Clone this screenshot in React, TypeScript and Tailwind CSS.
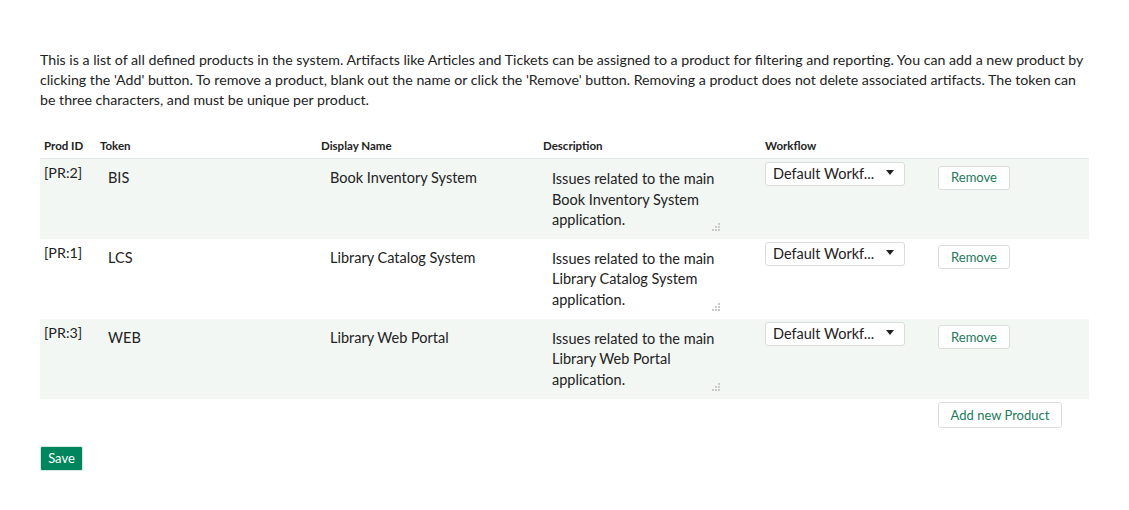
import React from "react";

interface Product {
  id: string;
  token: string;
  name: string;
  description: string;
}

const products: Product[] = [
  {
    id: "[PR:2]",
    token: "BIS",
    name: "Book Inventory System",
    description: "Issues related to the main Book Inventory System application.",
  },
  {
    id: "[PR:1]",
    token: "LCS",
    name: "Library Catalog System",
    description: "Issues related to the main Library Catalog System application.",
  },
  {
    id: "[PR:3]",
    token: "WEB",
    name: "Library Web Portal",
    description: "Issues related to the main Library Web Portal application.",
  },
];

function Grip() {
  // dotted resize grip in the corner of the textarea
  return (
    <svg
      width="9"
      height="9"
      viewBox="0 0 9 9"
      className="absolute right-[40px] bottom-[7px] pointer-events-none"
    >
      <rect x="6" y="0" width="2" height="2" fill="#c9ccc9" />
      <rect x="3" y="3" width="2" height="2" fill="#c9ccc9" />
      <rect x="6" y="3" width="2" height="2" fill="#c9ccc9" />
      <rect x="0" y="6" width="2" height="2" fill="#c9ccc9" />
      <rect x="3" y="6" width="2" height="2" fill="#c9ccc9" />
      <rect x="6" y="6" width="2" height="2" fill="#c9ccc9" />
    </svg>
  );
}

export default function App() {
  return (
    <div className="min-h-[510px] bg-white px-10 pt-[50px] pb-10 font-['Lato','Noto_Sans',sans-serif] text-[#222]">
      {/* Intro */}
      <p className="text-[14.2px] leading-[20px] pr-1">
        This is a list of all defined products in the system. Artifacts like Articles and Tickets can be
        assigned to a product for filtering and reporting. You can add a new product by clicking the 'Add'
        button. To remove a product, blank out the name or click the 'Remove' button. Removing a product does
        not delete associated artifacts. The token can be three characters, and must be unique per product.
      </p>

      {/* Products table */}
      <table className="mt-7 w-full table-fixed border-collapse">
        <colgroup>
          <col className="w-[56px]" />
          <col className="w-[221px]" />
          <col className="w-[222px]" />
          <col className="w-[222px]" />
          <col className="w-[173px]" />
          <col />
        </colgroup>
        <thead>
          <tr className="h-[20px] border-b border-[#e6e8e6] text-left text-[11.5px] font-bold leading-[16px] text-[#222]">
            <th className="px-1 pt-0 pb-[4px]">Prod ID</th>
            <th className="px-1 pt-0 pb-[4px]">Token</th>
            <th className="px-1 pt-0 pb-[4px]">Display Name</th>
            <th className="px-1 pt-0 pb-[4px]">Description</th>
            <th className="px-1 pt-0 pb-[4px]">Workflow</th>
            <th></th>
          </tr>
        </thead>
        <tbody>
          {products.map((p, index) => (
            <tr key={p.id} className={index % 2 === 0 ? "h-[80px] bg-[#f3f7f4]" : "h-[80px] bg-white"}>
              <td className="px-1 pt-[4px] align-top text-[14.3px] leading-[20px]">{p.id}</td>
              <td className="px-1 pt-1 align-top">
                <input
                  defaultValue={p.token}
                  className="w-full bg-transparent px-2 pt-[5px] pb-[7px] text-[14.5px] leading-[20px] outline-none"
                />
              </td>
              <td className="px-1 pt-1 align-top">
                <input
                  defaultValue={p.name}
                  className="w-full bg-transparent px-[9px] pt-[5px] pb-[7px] text-[14.5px] leading-[20px] outline-none"
                />
              </td>
              <td className="relative px-1 pt-1 align-top">
                <textarea
                  defaultValue={p.description}
                  rows={3}
                  className="block h-[72px] w-[190px] resize-none overflow-hidden bg-transparent px-[9px] py-[6px] text-[14.5px] leading-[20.5px] outline-none"
                />
                <Grip />
              </td>
              <td className="px-1 pt-[3px] align-top">
                <div className="flex h-[24px] w-[140px] items-center justify-between rounded-[3px] border border-[#dcdcdc] bg-white pl-[7px] pr-[10px] text-[14.5px]">
                  <span>Default Workf...</span>
                  <svg width="8" height="5" viewBox="0 0 8 5" className="-mt-[3px]">
                    <path d="M0 0h8L4 5z" fill="#222" />
                  </svg>
                </div>
              </td>
              <td className="px-1 pt-[5px] align-top">
                <button className="h-[24px] w-[72px] rounded-[3px] border border-[#dcdcdc] bg-white text-[13px] text-[#1c7a5a]">
                  Remove
                </button>
              </td>
            </tr>
          ))}
        </tbody>
      </table>

      <div className="grid grid-cols-[898px_1fr]">
        <div></div>
        <div className="pt-[3px]">
          <button className="h-[26px] w-[124px] rounded-[3px] border border-[#dcdcdc] bg-white text-[13px] text-[#1c7a5a]">
            Add new Product
          </button>
        </div>
      </div>

      <button className="mt-[18px] h-[25px] w-[43px] rounded-[2px] border border-[#d3e8de] bg-[#00855d] text-[13px] text-white">
        Save
      </button>
    </div>
  );
}
